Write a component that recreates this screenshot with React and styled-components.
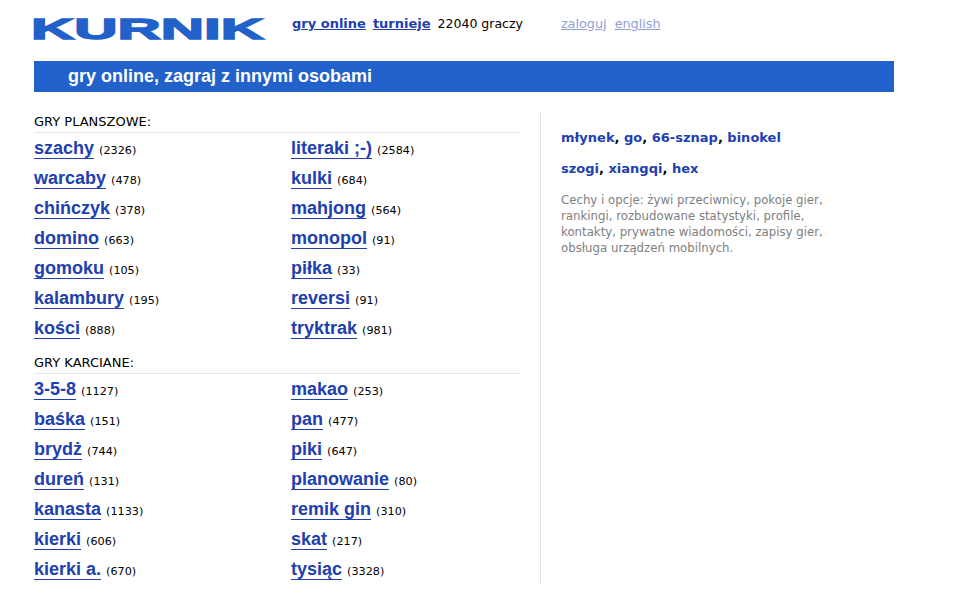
import React from 'react';
import styled, { createGlobalStyle } from 'styled-components';

const boardGames = [
  ['szachy', 2326], ['literaki ;-)', 2584],
  ['warcaby', 478], ['kulki', 684],
  ['chińczyk', 378], ['mahjong', 564],
  ['domino', 663], ['monopol', 91],
  ['gomoku', 105], ['piłka', 33],
  ['kalambury', 195], ['reversi', 91],
  ['kości', 888], ['tryktrak', 981],
];

const cardGames = [
  ['3-5-8', 1127], ['makao', 253],
  ['baśka', 151], ['pan', 477],
  ['brydż', 744], ['piki', 647],
  ['dureń', 131], ['planowanie', 80],
  ['kanasta', 1133], ['remik gin', 310],
  ['kierki', 606], ['skat', 217],
  ['kierki a.', 670], ['tysiąc', 3328],
];

const GameList = ({ title, games }) => (
  <Section>
    <SectionTitle>{title}</SectionTitle>
    <GameGrid>
      {games.map(([name, count]) => (
        <GameRow key={name}>
          <GameLink href="#">{name}</GameLink>
          <Count>({count})</Count>
        </GameRow>
      ))}
    </GameGrid>
  </Section>
);

export default function App() {
  return (
    <Page>
      <GlobalStyle />
      <Header>
        <Logo viewBox="0 0 232 22" aria-label="KURNIK">
          <text
            x="-3"
            y="21.4"
            textLength="233"
            lengthAdjust="spacingAndGlyphs"
            fontFamily="'Liberation Sans', Arial, sans-serif"
            fontWeight="700"
            fontSize="29"
            fill="#2161c9"
            stroke="#2161c9"
            strokeWidth="1.3"
          >
            KURNIK
          </text>
        </Logo>
        <Nav>
          <NavLink href="#">gry online</NavLink>
          <NavLink href="#">turnieje</NavLink>
          <Players>22040 graczy</Players>
        </Nav>
        <UserLinks>
          <UserLink href="#">zaloguj</UserLink>
          <UserLink href="#">english</UserLink>
        </UserLinks>
      </Header>
      <Banner>gry online, zagraj z innymi osobami</Banner>
      <Content>
        <Main>
          <GameList title="GRY PLANSZOWE:" games={boardGames} />
          <GameList title="GRY KARCIANE:" games={cardGames} />
        </Main>
        <Aside>
          <MoreGames>
            <MoreLink href="#">młynek</MoreLink>, <MoreLink href="#">go</MoreLink>,{' '}
            <MoreLink href="#">66-sznap</MoreLink>, <MoreLink href="#">binokel</MoreLink>
          </MoreGames>
          <MoreGames>
            <MoreLink href="#">szogi</MoreLink>, <MoreLink href="#">xiangqi</MoreLink>,{' '}
            <MoreLink href="#">hex</MoreLink>
          </MoreGames>
          <Features>
            Cechy i opcje: żywi przeciwnicy, pokoje gier, rankingi, rozbudowane statystyki,
            profile, kontakty, prywatne wiadomości, zapisy gier, obsługa urządzeń mobilnych.
          </Features>
        </Aside>
      </Content>
    </Page>
  );
}

const GlobalStyle = createGlobalStyle`
  html, body {
    margin: 0;
    background: #fff;
  }

  body {
    font-family: "DejaVu Sans", Verdana, sans-serif;
    color: #000;
  }
`;

const Page = styled.div`
  width: 860px;
  padding: 17px 0 20px 34px;
`;

const Header = styled.header`
  display: flex;
  align-items: flex-start;
  height: 44px;
`;

const Logo = styled.svg`
  display: block;
  flex: none;
  width: 232px;
  height: 22px;
  margin-top: 1px;
  overflow: visible;
`;

const Nav = styled.nav`
  display: flex;
  align-items: baseline;
  margin-left: 26px;
  font-size: 13px;
  line-height: 14px;
`;

const NavLink = styled.a`
  margin-right: 7px;
  font-weight: 700;
  color: #2040b0;
  text-decoration: underline;
`;

const Players = styled.span`
  color: #000;
  font-size: 12.5px;
`;

const UserLinks = styled.div`
  display: flex;
  gap: 8px;
  margin-left: 38px;
  font-size: 12.8px;
  line-height: 14px;
`;

const UserLink = styled.a`
  color: #8f9fd8;
  text-decoration: underline;
`;

const Banner = styled.h1`
  margin: 0;
  height: 31px;
  padding-left: 34px;
  background: #2161c9;
  color: #fff;
  font-family: "Liberation Sans", Arial, sans-serif;
  font-size: 18px;
  font-weight: 700;
  line-height: 30px;
`;

const Content = styled.div`
  display: flex;
  margin-top: 20px;
`;

const Main = styled.main`
  box-sizing: border-box;
  flex: none;
  width: 507px;
  height: 472px;
  padding-right: 20px;
  border-right: 1px solid #e6e6e6;
`;

const Section = styled.section`
  margin-bottom: 10px;
`;

const SectionTitle = styled.h2`
  margin: 0;
  padding-bottom: 1px;
  border-bottom: 1px solid #e8e8e8;
  font-size: 13px;
  font-weight: 400;
  line-height: 19px;
`;

const GameGrid = styled.div`
  display: grid;
  grid-template-columns: 257px 229px;
  grid-auto-rows: 30px;
`;

const GameRow = styled.div`
  white-space: nowrap;
  line-height: 30px;
`;

const GameLink = styled.a`
  border-bottom: 1px solid #2040b0;
  color: #2040b0;
  font-family: "Liberation Sans", Arial, sans-serif;
  font-size: 18px;
  font-weight: 700;
  text-decoration: none;
`;

const Count = styled.span`
  margin-left: 5px;
  font-size: 11.2px;
`;

const Aside = styled.aside`
  width: 280px;
  padding: 18px 0 0 20px;
`;

const MoreGames = styled.p`
  margin: 0 0 15px;
  color: #000;
  font-size: 13px;
  font-weight: 700;
  line-height: 16px;
`;

const MoreLink = styled.a`
  color: #2040b0;
  text-decoration: none;
`;

const Features = styled.p`
  margin: 0;
  color: #808080;
  font-size: 11.75px;
  line-height: 16px;
`;
